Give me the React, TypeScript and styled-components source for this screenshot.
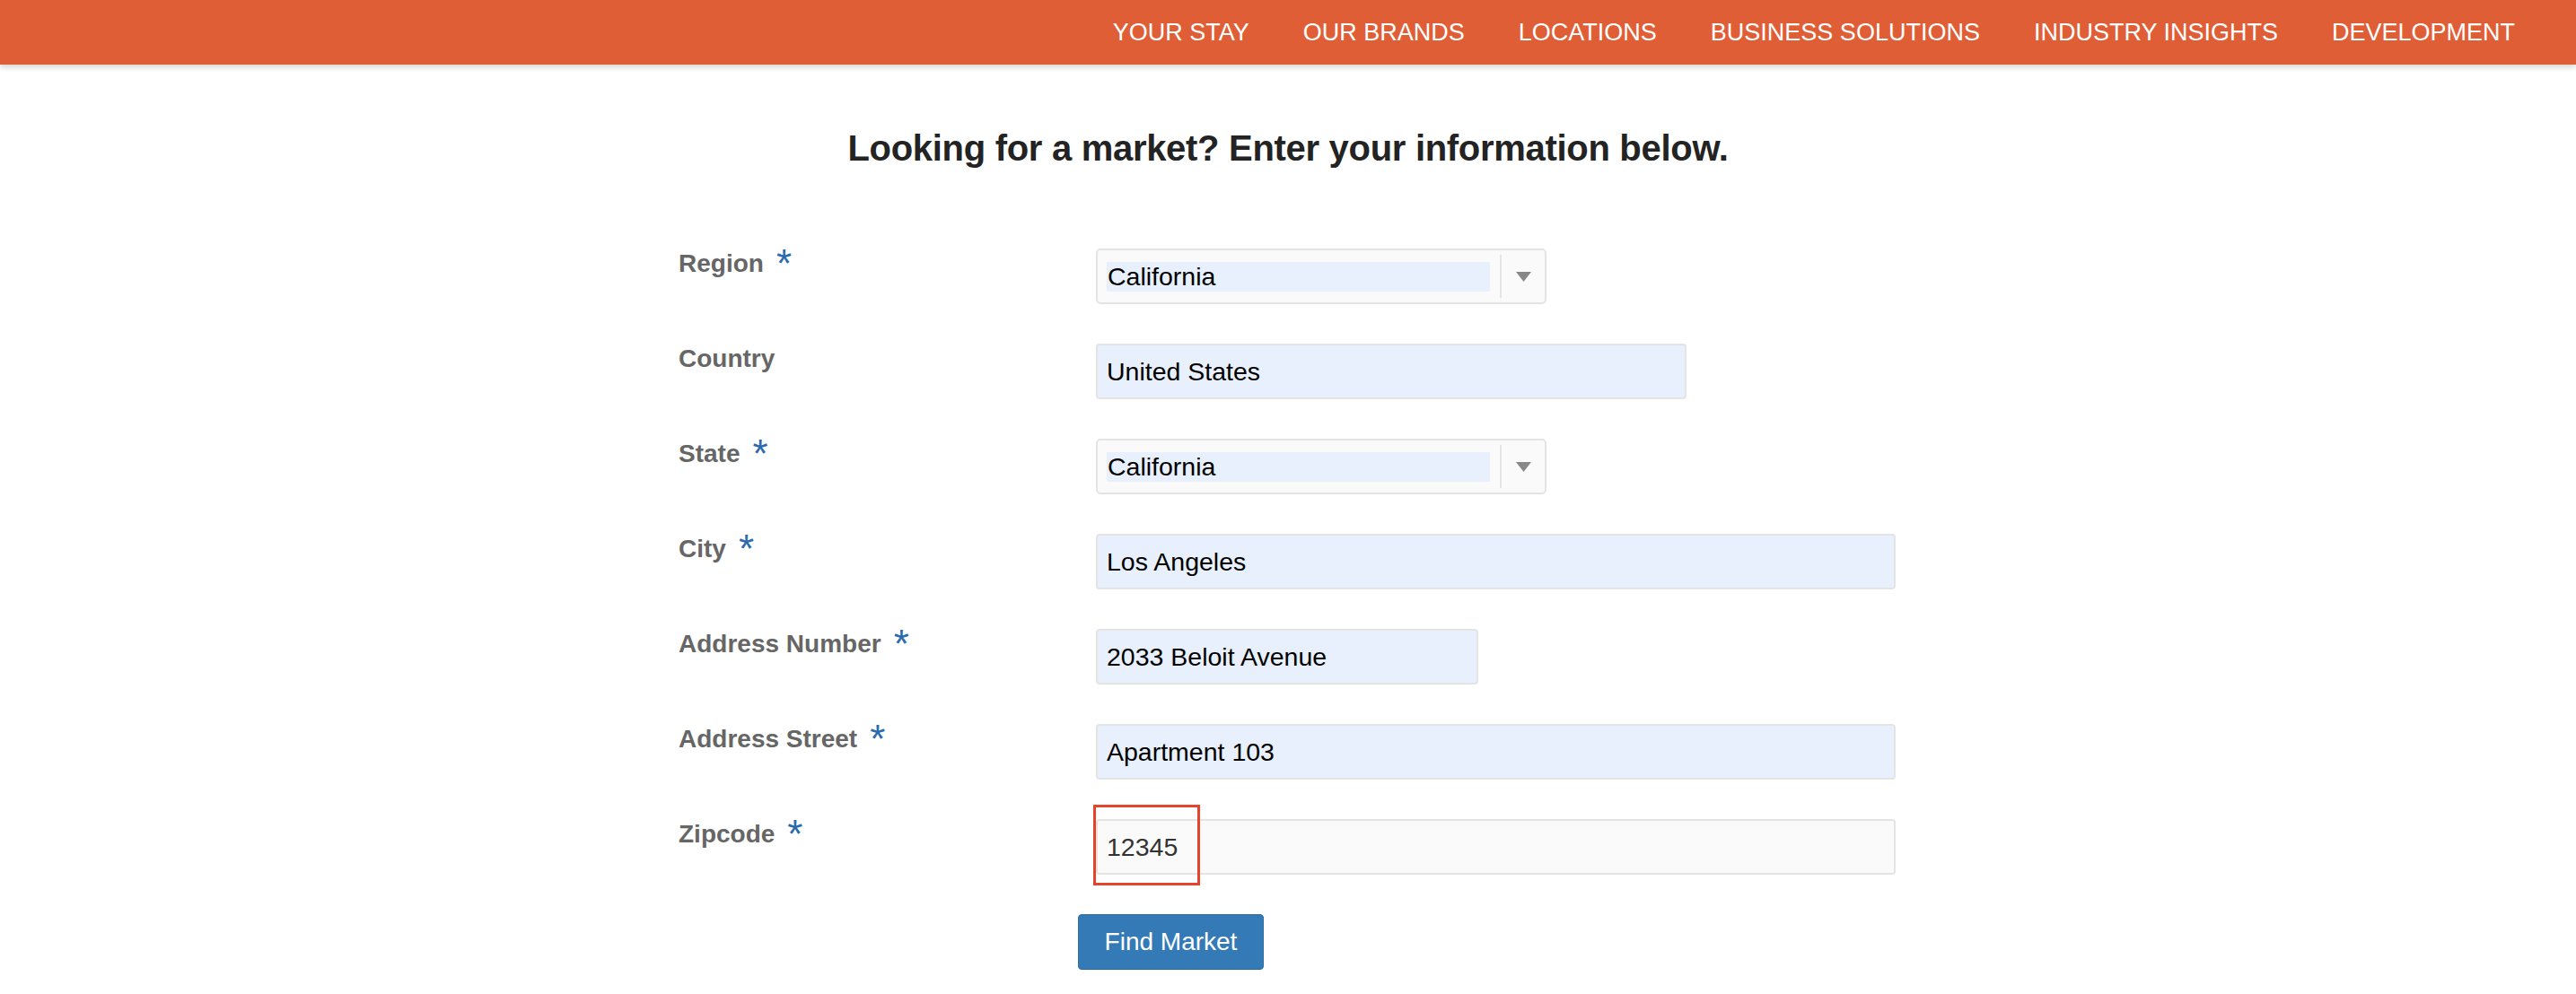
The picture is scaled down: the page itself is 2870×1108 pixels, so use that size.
import styled, { createGlobalStyle } from "styled-components";

const GlobalStyle = createGlobalStyle`
	body {
		margin: 0;
		background: #fff;
		font-family: "Liberation Sans", Arial, sans-serif;
	}
`;

const NavBar = styled.header`
	position: relative;
	z-index: 1;
	height: 72px;
	display: flex;
	justify-content: flex-end;
	gap: 60px;
	padding-right: 68px;
	background-color: #e05e36;
	box-shadow: 0 3px 6px rgba(0, 0, 0, 0.16);
`;

const NavLink = styled.a`
	color: #fff;
	font-size: 27px;
	line-height: 72px;
	text-decoration: none;
	white-space: nowrap;
`;

const Heading = styled.h1`
	margin: 70px 0 0;
	text-align: center;
	color: #232323;
	font-size: 40px;
	font-weight: 700;
	line-height: 46px;
	letter-spacing: -0.3px;
`;

const Form = styled.form`
	width: 1358px;
	margin: 89px auto 0;
	display: flex;
	flex-direction: column;
	gap: 44px;
`;

const FieldRow = styled.div`
	display: grid;
	grid-template-columns: 465px 1fr;
	align-items: start;
`;

const Label = styled.label`
	color: #666;
	font-size: 28px;
	font-weight: 700;
	line-height: 34px;
	white-space: nowrap;
`;

const Required = styled.span`
	margin-left: 14px;
	color: #2a6aae;
	font-size: 44px;
	font-weight: 400;
	line-height: 0;
	vertical-align: -6px;
`;

const TextInput = styled.input<{ $width: number; $filled?: boolean }>`
	box-sizing: border-box;
	display: block;
	width: ${(p) => p.$width}px;
	height: 62px;
	padding: 0 10px;
	border: 2px solid #e4e4e4;
	border-radius: 4px;
	background-color: ${(p) => (p.$filled ? "#e8f0fe" : "#fafafa")};
	color: ${(p) => (p.$filled ? "#000" : "#333")};
	font-family: "Liberation Sans", Arial, sans-serif;
	font-size: 28.5px;
	outline: none;
`;

const SelectBox = styled.div`
	box-sizing: border-box;
	width: 502px;
	height: 62px;
	display: flex;
	align-items: center;
	padding: 0 0 0 10px;
	border: 2px solid #e4e4e4;
	border-radius: 5px;
	background-color: #fafafa;
`;

const SelectValue = styled.span`
	width: 426px;
	height: 33px;
	display: flex;
	align-items: center;
	padding-left: 1px;
	background-color: #e8f0fe;
	color: #000;
	font-size: 28.5px;
`;

const SelectDivider = styled.span`
	align-self: stretch;
	width: 2px;
	margin: 5px 0 5px 11px;
	background-color: #e4e4e4;
`;

const SelectArrow = styled.span`
	flex: 1;
	display: flex;
	justify-content: center;
	align-items: center;
`;

const Annotated = styled.div`
	position: relative;
	width: fit-content;
`;

const Highlight = styled.span`
	position: absolute;
	left: -3px;
	top: -16px;
	width: 119px;
	height: 90px;
	box-sizing: border-box;
	border: 3px solid #e5432b;
	pointer-events: none;
`;

const ActionRow = styled.div`
	padding-left: 445px;
`;

const SubmitButton = styled.button`
	width: 207px;
	height: 62px;
	border: 1px solid #2e6da4;
	border-radius: 4px;
	background-color: #337ab7;
	color: #fff;
	font-family: "Liberation Sans", Arial, sans-serif;
	font-size: 28px;
	cursor: pointer;
`;

const navItems = ["YOUR STAY", "OUR BRANDS", "LOCATIONS", "BUSINESS SOLUTIONS", "INDUSTRY INSIGHTS", "DEVELOPMENT"];

function Select({ value }: { value: string }) {
	return (
		<SelectBox>
			<SelectValue>{value}</SelectValue>
			<SelectDivider />
			<SelectArrow>
				<svg width="17" height="11" viewBox="0 0 17 11">
					<path d="M0 0h17L8.5 11z" fill="#888" />
				</svg>
			</SelectArrow>
		</SelectBox>
	);
}

function FieldLabel({ text, required }: { text: string; required?: boolean }) {
	return (
		<Label>
			{text}
			{required && <Required>*</Required>}
		</Label>
	);
}

export default function App() {
	return (
		<>
			<GlobalStyle />
			<NavBar>
				{navItems.map((item) => (
					<NavLink key={item} href="#">
						{item}
					</NavLink>
				))}
			</NavBar>
			<Heading>Looking for a market? Enter your information below.</Heading>
			<Form onSubmit={(e) => e.preventDefault()}>
				<FieldRow>
					<FieldLabel text="Region" required />
					<Select value="California" />
				</FieldRow>
				<FieldRow>
					<FieldLabel text="Country" />
					<TextInput $width={658} $filled readOnly value="United States" />
				</FieldRow>
				<FieldRow>
					<FieldLabel text="State" required />
					<Select value="California" />
				</FieldRow>
				<FieldRow>
					<FieldLabel text="City" required />
					<TextInput $width={891} $filled readOnly value="Los Angeles" />
				</FieldRow>
				<FieldRow>
					<FieldLabel text="Address Number" required />
					<TextInput $width={426} $filled readOnly value="2033 Beloit Avenue" />
				</FieldRow>
				<FieldRow>
					<FieldLabel text="Address Street" required />
					<TextInput $width={891} $filled readOnly value="Apartment 103" />
				</FieldRow>
				<FieldRow>
					<FieldLabel text="Zipcode" required />
					<Annotated>
						<TextInput $width={891} readOnly value="12345" />
						<Highlight />
					</Annotated>
				</FieldRow>
				<ActionRow>
					<SubmitButton type="submit">Find Market</SubmitButton>
				</ActionRow>
			</Form>
		</>
	);
}
